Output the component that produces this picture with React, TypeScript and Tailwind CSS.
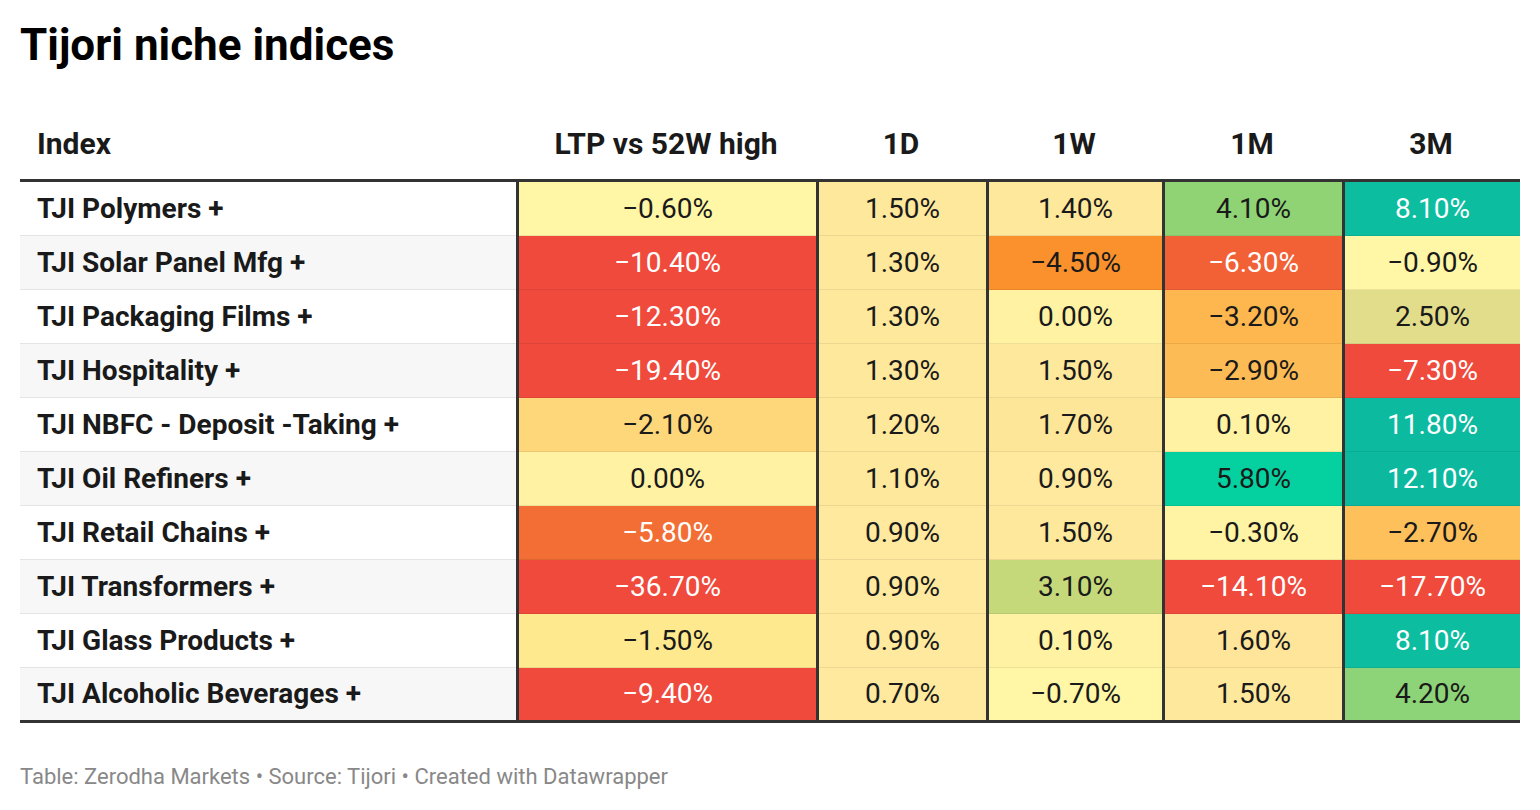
import React from "react";

type Cell = { v: string; bg: string; light?: boolean };

const RED = "#ef4a3c";
const PALE = "#fee89c";

const columns = ["LTP vs 52W high", "1D", "1W", "1M", "3M"];

const rows: { name: string; cells: Cell[] }[] = [
  {
    name: "TJI Polymers +",
    cells: [
      { v: "−0.60%", bg: "#fff6a6" },
      { v: "1.50%", bg: PALE },
      { v: "1.40%", bg: PALE },
      { v: "4.10%", bg: "#8fd375" },
      { v: "8.10%", bg: "#0cbda0", light: true },
    ],
  },
  {
    name: "TJI Solar Panel Mfg +",
    cells: [
      { v: "−10.40%", bg: RED, light: true },
      { v: "1.30%", bg: PALE },
      { v: "−4.50%", bg: "#fb912c" },
      { v: "−6.30%", bg: "#f26036", light: true },
      { v: "−0.90%", bg: "#fff6a6" },
    ],
  },
  {
    name: "TJI Packaging Films +",
    cells: [
      { v: "−12.30%", bg: RED, light: true },
      { v: "1.30%", bg: PALE },
      { v: "0.00%", bg: "#fff3a3" },
      { v: "−3.20%", bg: "#fdb74e" },
      { v: "2.50%", bg: "#e2dd8b" },
    ],
  },
  {
    name: "TJI Hospitality +",
    cells: [
      { v: "−19.40%", bg: RED, light: true },
      { v: "1.30%", bg: PALE },
      { v: "1.50%", bg: PALE },
      { v: "−2.90%", bg: "#fdbb55" },
      { v: "−7.30%", bg: RED, light: true },
    ],
  },
  {
    name: "TJI NBFC - Deposit -Taking +",
    cells: [
      { v: "−2.10%", bg: "#fed77a" },
      { v: "1.20%", bg: PALE },
      { v: "1.70%", bg: "#fee698" },
      { v: "0.10%", bg: "#fff3a3" },
      { v: "11.80%", bg: "#0cbaa0", light: true },
    ],
  },
  {
    name: "TJI Oil Refiners +",
    cells: [
      { v: "0.00%", bg: "#fff3a3" },
      { v: "1.10%", bg: PALE },
      { v: "0.90%", bg: "#fee99e" },
      { v: "5.80%", bg: "#05d1a0" },
      { v: "12.10%", bg: "#0cb99f", light: true },
    ],
  },
  {
    name: "TJI Retail Chains +",
    cells: [
      { v: "−5.80%", bg: "#f26e34", light: true },
      { v: "0.90%", bg: "#fee99e" },
      { v: "1.50%", bg: PALE },
      { v: "−0.30%", bg: "#fff4a3" },
      { v: "−2.70%", bg: "#fdc05b" },
    ],
  },
  {
    name: "TJI Transformers +",
    cells: [
      { v: "−36.70%", bg: RED, light: true },
      { v: "0.90%", bg: "#fee99e" },
      { v: "3.10%", bg: "#c5d97b" },
      { v: "−14.10%", bg: RED, light: true },
      { v: "−17.70%", bg: RED, light: true },
    ],
  },
  {
    name: "TJI Glass Products +",
    cells: [
      { v: "−1.50%", bg: "#fee98e" },
      { v: "0.90%", bg: "#fee99e" },
      { v: "0.10%", bg: "#fff3a3" },
      { v: "1.60%", bg: "#fee59a" },
      { v: "8.10%", bg: "#0cbda0", light: true },
    ],
  },
  {
    name: "TJI Alcoholic Beverages +",
    cells: [
      { v: "−9.40%", bg: RED, light: true },
      { v: "0.70%", bg: "#fee99e" },
      { v: "−0.70%", bg: "#fff6a6" },
      { v: "1.50%", bg: PALE },
      { v: "4.20%", bg: "#8dd377" },
    ],
  },
];

const grid = "grid grid-cols-[496px_300px_170px_176px_180px_178px]";

export default function App() {
  return (
    <div className="w-[1540px] h-[810px] bg-white px-5 pt-[19px] font-[Roboto,Arial,sans-serif] text-[#1a1a1a]">
      <h1 className="text-[44px] leading-[52px] font-bold text-black">Tijori niche indices</h1>

      <div className="mt-[37px] w-[1500px] border-b-[3px] border-[#333]">
        <div className={`${grid} h-[74px] items-center border-b-[3px] border-[#333] text-[30px] font-bold`}>
          <div className="pl-[17px]">Index</div>
          {columns.map((c) => (
            <div key={c} className="text-center">
              {c}
            </div>
          ))}
        </div>

        {rows.map((r, i) => {
          const last = i === rows.length - 1;
          return (
            <div key={r.name} className={`${grid} ${last ? "h-[52px]" : "h-[54px]"}`}>
              <div
                className={`flex items-center pl-[17px] text-[28px] font-bold ${
                  i % 2 === 1 ? "bg-[#f7f7f7]" : "bg-white"
                } ${last ? "" : "border-b border-[#e4e4e4]"}`}
              >
                {r.name}
              </div>
              {r.cells.map((c, j) => (
                <div
                  key={j}
                  className="flex flex-col border-l-[3px] border-[#333]"
                  style={{ backgroundColor: c.bg }}
                >
                  <div
                    className={`flex flex-1 items-center justify-center text-[28px] ${
                      c.light ? "text-white" : "text-[#1a1a1a]"
                    }`}
                  >
                    {c.v}
                  </div>
                  {!last && <div className="h-px bg-black/[0.07]" />}
                </div>
              ))}
            </div>
          );
        })}
      </div>

      <div className="mt-[41px] text-[22px] leading-[26px] text-[#888]">
        Table: Zerodha Markets • Source: Tijori • Created with Datawrapper
      </div>
    </div>
  );
}
